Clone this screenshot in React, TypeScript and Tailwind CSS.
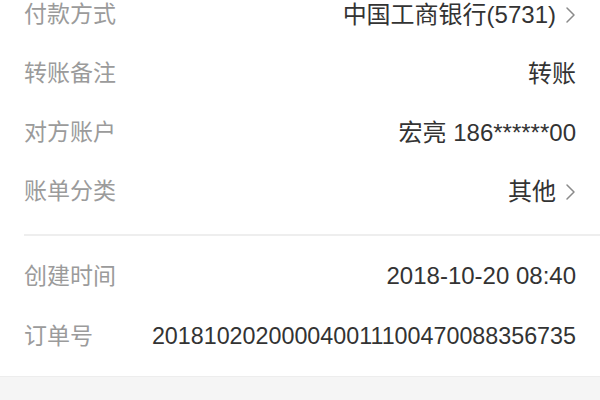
const font = "font-['PingFang_SC','Liberation_Sans','Noto_Sans_CJK_SC',sans-serif]";

function Chevron() {
  return (
    <svg width="11" height="18" viewBox="0 0 11 18" className="ml-[9px] shrink-0">
      <path d="M2 2 L9 9 L2 16" fill="none" stroke="#8a8a8a" strokeWidth="1.5" strokeLinecap="round" strokeLinejoin="round" />
    </svg>
  );
}

type RowProps = {
  label: string;
  value: string;
  arrow?: boolean;
  tall?: boolean;
  valueSize?: string;
  className?: string;
};

function Row({ label, value, arrow, tall, valueSize = "text-[24px]", className = "" }: RowProps) {
  return (
    <div className={`flex items-center justify-between ${tall ? "h-[60px]" : "h-[59px]"} ${className}`}>
      <span className="shrink-0 text-[23px] text-[#9b9b9b]">{label}</span>
      <span className={`flex items-center ${valueSize} text-[#333333]`}>
        {value}
        {arrow && <Chevron />}
      </span>
    </div>
  );
}

export default function App() {
  return (
    <div className={`flex h-[400px] w-[600px] flex-col overflow-hidden bg-white ${font}`}>
      <div className="px-[24px]">
        <Row label="付款方式" value="中国工商银行(5731)" arrow className="-mt-[15px]" />
        <Row label="转账备注" value="转账" />
        <Row label="对方账户" value="宏亮 186******00" />
        <Row label="账单分类" value="其他" arrow />
      </div>
      <div className="mt-[13px] ml-[24px] h-[2px] bg-[#eeeeee]" />
      <div className="px-[24px] pt-[10px] pb-[10px]">
        <Row label="创建时间" value="2018-10-20 08:40" tall />
        <Row label="订单号" value="201810202000040011100470088356735" valueSize="text-[23.3px]" tall />
      </div>
      <div className="flex-1 border-t border-[#ededed] bg-[#f5f5f5]" />
    </div>
  );
}
